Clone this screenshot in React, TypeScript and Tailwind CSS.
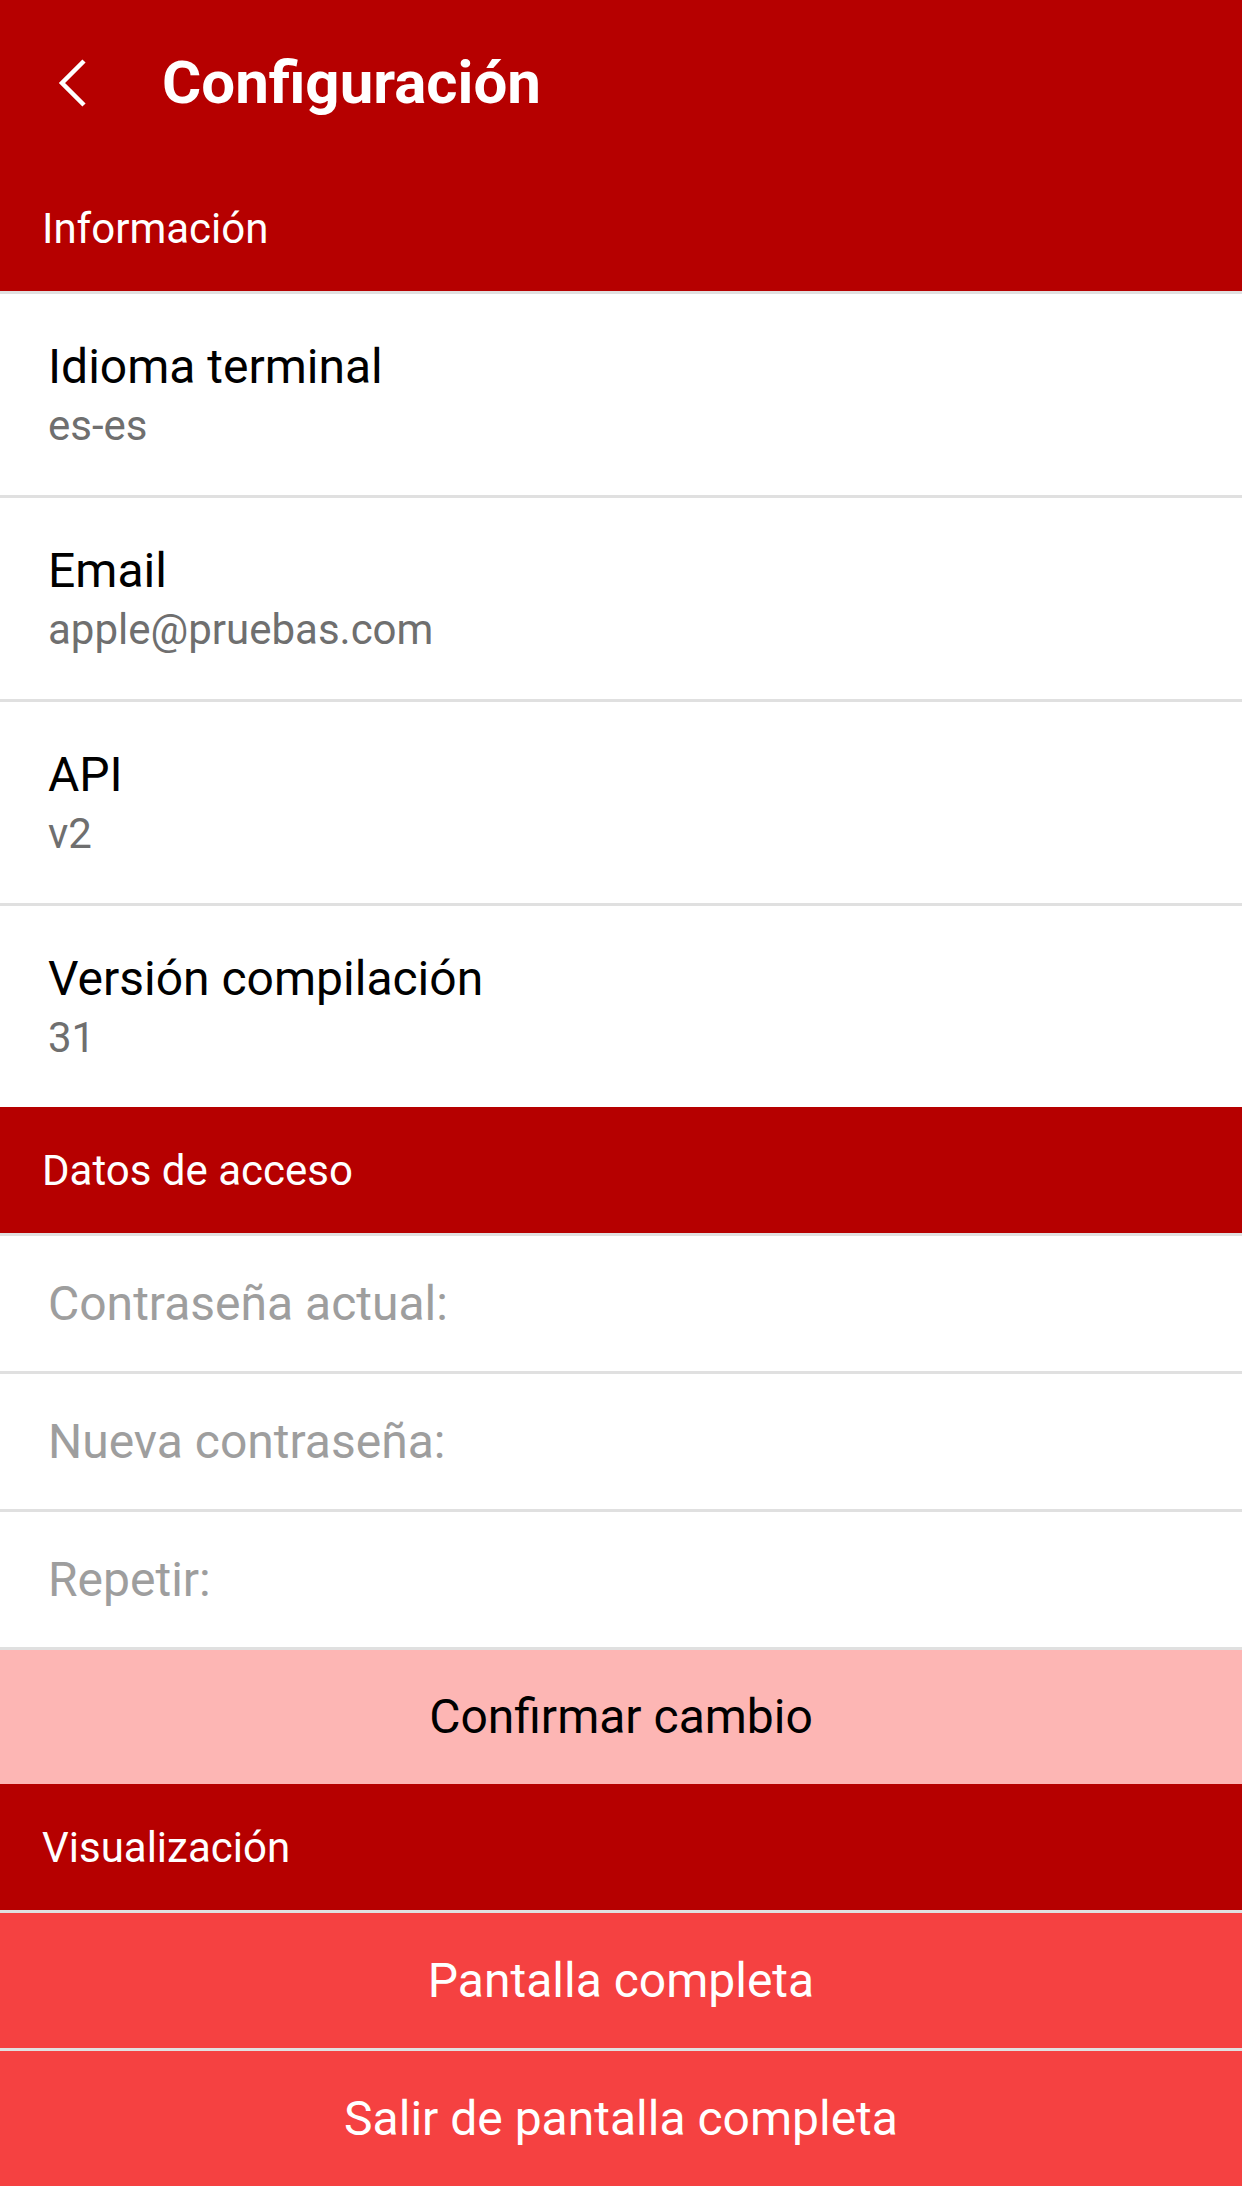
import { useState } from "react";

type InfoItem = {
  label: string;
  value: string;
};

const infoItems: InfoItem[] = [
  { label: "Idioma terminal", value: "es-es" },
  { label: "Email", value: "apple@pruebas.com" },
  { label: "API", value: "v2" },
  { label: "Versión compilación", value: "31" },
];

function SectionHeader({ title }: { title: string }) {
  return (
    <div className="flex h-[126px] items-center bg-[#b60000] pl-[42px] text-[42px] text-white">
      {title}
    </div>
  );
}

function Divider() {
  return <div className="h-[3px] bg-[#e0e0e0]" />;
}

export default function App() {
  const [current, setCurrent] = useState("");
  const [next, setNext] = useState("");
  const [repeat, setRepeat] = useState("");

  const fields = [
    { placeholder: "Contraseña actual:", value: current, onChange: setCurrent },
    { placeholder: "Nueva contraseña:", value: next, onChange: setNext },
    { placeholder: "Repetir:", value: repeat, onChange: setRepeat },
  ];

  return (
    <div className="min-h-[2208px] w-full bg-white font-['Roboto',sans-serif]">
      <header className="flex h-[165px] items-center bg-[#b60000] text-white">
        <button type="button" aria-label="Volver" className="ml-[56px] flex h-[50px] w-[32px] items-center">
          <svg width="32" height="50" viewBox="0 0 32 50" fill="none">
            <path d="M28 3 L6 25 L28 47" stroke="white" strokeWidth="4.5" />
          </svg>
        </button>
        <h1 className="ml-[74px] text-[60px] font-bold leading-none">Configuración</h1>
      </header>

      <SectionHeader title="Información" />
      <Divider />

      {infoItems.map((item, index) => (
        <div key={item.label}>
          <div className="flex h-[201px] flex-col justify-center pl-[48px]">
            <span className="text-[48px] leading-[56px] text-black">{item.label}</span>
            <span className="mt-[6px] text-[42px] leading-[50px] text-[#6f6f6f]">{item.value}</span>
          </div>
          {index < infoItems.length - 1 ? <Divider /> : null}
        </div>
      ))}

      <SectionHeader title="Datos de acceso" />
      <Divider />

      {fields.map((field) => (
        <div key={field.placeholder}>
          <input
            type="password"
            value={field.value}
            onChange={(event) => field.onChange(event.target.value)}
            placeholder={field.placeholder}
            className="block h-[135px] w-full bg-white pl-[48px] text-[48px] text-black outline-none placeholder:text-[#9e9e9e]"
          />
          <Divider />
        </div>
      ))}

      <button
        type="button"
        className="flex h-[134px] w-full items-center justify-center bg-[#fdb6b4] text-[48px] text-black"
      >
        Confirmar cambio
      </button>

      <SectionHeader title="Visualización" />
      <Divider />

      <button
        type="button"
        className="flex h-[135px] w-full items-center justify-center bg-[#f54141] text-[48px] text-white"
      >
        Pantalla completa
      </button>
      <Divider />
      <button
        type="button"
        className="flex h-[135px] w-full items-center justify-center bg-[#f54141] text-[48px] text-white"
      >
        Salir de pantalla completa
      </button>
    </div>
  );
}
